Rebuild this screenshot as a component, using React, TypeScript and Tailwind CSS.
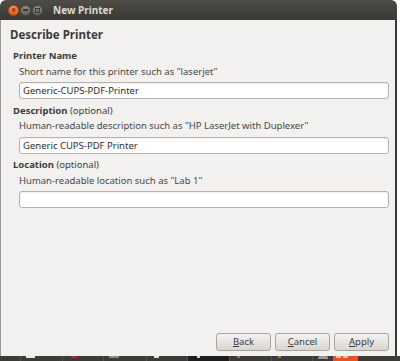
import React from "react";

const font = { fontFamily: '"Noto Sans", "Open Sans", "DejaVu Sans", sans-serif' };

function Field({ value, mt }: { value: string; mt: string }) {
  return (
    <div
      className={`${mt} ml-[18px] mr-[6px] h-[17px] rounded-[3px] border border-[#b5b1ab] bg-white pl-[3px] text-[9.5px] leading-[15px] text-[#2e2e2e] shadow-[inset_0_1px_1px_rgba(0,0,0,0.06)]`}
    >
      {value}
    </div>
  );
}

function Btn({ u, rest }: { u: string; rest: string }) {
  return (
    <div className="flex h-[18px] w-[55px] items-center justify-center rounded-[3px] border border-[#a8a49e] bg-gradient-to-b from-[#f4f3f1] to-[#d9d6d1] text-[9.5px] text-[#3c3c3c]">
      <span className="underline underline-offset-1">{u}</span>
      {rest}
    </div>
  );
}

function PanelSeg({ w, dark, children }: { w: string; dark?: boolean; children?: React.ReactNode }) {
  return (
    <div className={`${w} ${dark ? "bg-[#1e1e1c]" : ""} flex h-full items-start border-r border-[#55534e]`}>{children}</div>
  );
}

export default function App() {
  return (
    <div className="h-[361px] w-[400px] bg-white" style={font}>
      <div className="flex h-[356px] w-[397px] flex-col overflow-hidden rounded-t-[6px]">
        <div className="flex h-[20px] shrink-0 items-center bg-gradient-to-b from-[#4d4c47] to-[#3a3935] pl-[8px]">
          <div className="flex h-[11px] w-[11px] items-center justify-center rounded-full border border-[#b84a16] bg-gradient-to-b from-[#f7915c] to-[#df5417] text-[8px] font-bold leading-none text-[#6b2a0c]">
            ×
          </div>
          <div className="ml-[1px] flex h-[11px] w-[11px] items-center justify-center rounded-full border border-[#4a4944] bg-gradient-to-b from-[#8d8c86] to-[#62615c]">
            <div className="h-[1.5px] w-[5px] bg-[#3a3935]" />
          </div>
          <div className="ml-[1px] flex h-[11px] w-[11px] items-center justify-center rounded-full border border-[#4a4944] bg-gradient-to-b from-[#8d8c86] to-[#62615c]">
            <div className="h-[5px] w-[5px] border border-[#3a3935]" />
          </div>
          <span className="ml-[10px] text-[10px] font-bold text-[#dfdbd2]">New Printer</span>
        </div>
        <div className="flex flex-1 flex-col border-l border-r-2 border-l-[#9a9893] border-r-[#3a3935] bg-[#f2f1f0] text-[#3c3c3c]">
          <div className="ml-[9px] mt-[7px] text-[11.5px] font-bold leading-[16px]">Describe Printer</div>
          <div className="ml-[12px] mt-[6px] text-[9.5px] font-bold leading-[14px]">Printer Name</div>
          <div className="ml-[18px] mt-[2px] text-[9.5px] leading-[14px] text-[#474747]">
            Short name for this printer such as "laserjet"
          </div>
          <Field mt="mt-[3px]" value="Generic-CUPS-PDF-Printer" />
          <div className="ml-[12px] mt-[5px] text-[9.5px] leading-[14px]">
            <span className="font-bold">Description</span> (optional)
          </div>
          <div className="ml-[18px] mt-[1px] text-[9.5px] leading-[14px] text-[#474747]">
            Human-readable description such as "HP LaserJet with Duplexer"
          </div>
          <Field mt="mt-[4px]" value="Generic CUPS-PDF Printer" />
          <div className="ml-[12px] mt-[4px] text-[9.5px] leading-[14px]">
            <span className="font-bold">Location</span> (optional)
          </div>
          <div className="ml-[18px] mt-[2px] text-[9.5px] leading-[14px] text-[#474747]">
            Human-readable location such as "Lab 1"
          </div>
          <Field mt="mt-[3px]" value="" />
          <div className="flex-1" />
          <div className="mb-[5px] flex justify-end gap-[4px] pr-[6px]">
            <Btn u="B" rest="ack" />
            <Btn u="C" rest="ancel" />
            <Btn u="A" rest="pply" />
          </div>
        </div>
      </div>
      <div className="flex h-[5px] w-[400px] bg-[#3c3b37]">
        <PanelSeg w="w-[21px]" />
        <PanelSeg w="w-[42px]">
          <div className="ml-[5px] h-[2px] w-[9px] bg-[#e8e8e8]" />
        </PanelSeg>
        <PanelSeg w="w-[41px]">
          <div className="ml-[8px] h-[2px] w-[6px] bg-[#c42222]" />
        </PanelSeg>
        <PanelSeg w="w-[43px]">
          <div className="ml-[5px] h-[2px] w-[10px] bg-[#8a8a8a]" />
        </PanelSeg>
        <PanelSeg w="w-[41px]">
          <div className="ml-[7px] h-[2px] w-[5px] bg-[#e0e0e0]" />
        </PanelSeg>
        <PanelSeg w="w-[42px]" dark>
          <div className="ml-[9px] h-[2px] w-[3px] bg-[#d0d0d0]" />
        </PanelSeg>
        <PanelSeg w="w-[42px]">
          <div className="ml-[7px] h-[2px] w-[3px] bg-[#9c7a3c]" />
        </PanelSeg>
        <PanelSeg w="w-[41px]">
          <div className="ml-[6px] h-[2px] w-[3px] bg-[#9c7a3c]" />
        </PanelSeg>
        <div className="ml-[5px] h-[3px] w-[10px] rounded-t-[2px] bg-[#9a9a9a]" />
        <div className="ml-[5px] flex h-[5px] w-[25px] items-start gap-[2px] bg-[#e8541e] px-[3px]">
          <div className="h-[2px] w-[5px] bg-[#f4b9a0]" />
          <div className="h-[2px] w-[5px] bg-[#f4b9a0]" />
        </div>
      </div>
    </div>
  );
}
